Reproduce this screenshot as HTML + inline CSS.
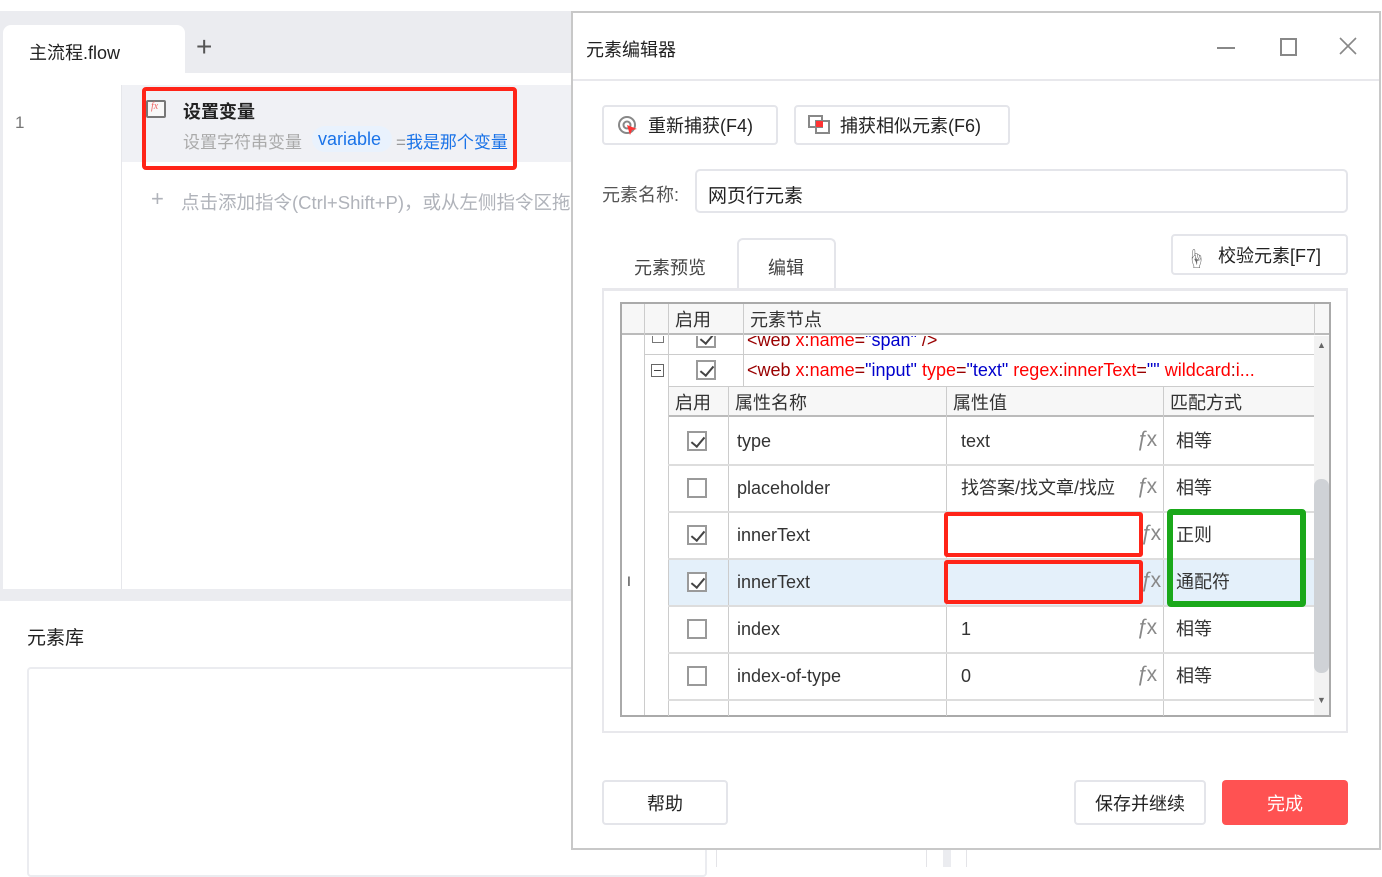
<!DOCTYPE html>
<html><head><meta charset="utf-8"><style>
*{margin:0;padding:0;box-sizing:border-box}
body{width:1382px;height:867px;position:relative;overflow:hidden;background:#fff;font-family:"Liberation Sans","Noto Sans CJK SC",sans-serif;color:#333}
.a{position:absolute}
.t{position:absolute;white-space:nowrap}
.btn{position:absolute;border:2px solid #e4e5ea;border-radius:4px;background:#fff;font-size:18px;color:#222;display:flex;align-items:center;justify-content:center}
.hl{position:absolute;background:#ccc}
.cb{position:absolute;width:20px;height:20px;border:2px solid #9a9a9a;background:#fff}
.cb.c::after{content:"";position:absolute;left:5px;top:1px;width:6px;height:11px;border:solid #444;border-width:0 2px 2px 0;transform:rotate(40deg)}
.fx{position:absolute;font-family:"Liberation Sans",sans-serif;color:#888;font-size:21px;letter-spacing:-2px}
.cell{position:absolute;font-size:18px;color:#333;white-space:nowrap;line-height:22px}
</style></head><body>
<!-- left app -->
<div class="a" style="left:0;top:11px;width:580px;height:590px;background:#ebecf0"></div>
<div class="a" style="left:3px;top:25px;width:182px;height:60px;background:#fff;border-radius:8px 8px 0 0"></div>
<div class="t" style="left:29px;top:39px;font-size:18px;color:#222">主流程.flow</div>
<div class="t" style="left:196px;top:31px;font-size:28px;color:#555;font-weight:300">+</div>
<div class="a" style="left:3px;top:73px;width:568px;height:516px;background:#fff"></div>
<div class="a" style="left:122px;top:85px;width:449px;height:77px;background:#f0f1f5"></div>
<div class="a" style="left:121px;top:85px;width:1px;height:504px;background:#e6e7eb"></div>
<div class="t" style="left:15px;top:113px;font-size:17px;color:#777">1</div>
<div class="a" style="left:146px;top:100px;width:20px;height:18px;border:2px solid #777;border-radius:2px;background:#f8f8f8"></div>
<div class="t" style="left:151px;top:101px;font-size:10px;color:#e66;font-style:italic;font-family:'Liberation Serif',serif">fx</div>
<div class="t" style="left:183px;top:98px;font-size:18px;font-weight:bold;color:#222">设置变量</div>
<div class="t" style="left:183px;top:128px;font-size:17px;color:#aaa">设置字符串变量</div>
<div class="a" style="left:312px;top:126px;width:80px;height:26px;background:#e9f2fd;border-radius:13px"></div>
<div class="t" style="left:318px;top:129px;font-size:18px;color:#1a73e8">variable</div>
<div class="t" style="left:396px;top:128px;font-size:17px;color:#999">=<span style="color:#1a73e8">我是那个变量</span></div>
<div class="a" style="left:142px;top:87px;width:375px;height:83px;border:4px solid #ff2418;border-radius:4px"></div>
<div class="t" style="left:151px;top:186px;font-size:22px;color:#b0b3ba;font-weight:300">+</div>
<div class="a" style="left:181px;top:189px;width:390px;height:26px;overflow:hidden"><div class="t" style="left:0;top:0;font-size:18.5px;color:#b0b3ba">点击添加指令(Ctrl+Shift+P)，或从左侧指令区拖动</div></div>
<div class="a" style="left:3px;top:601px;width:568px;height:266px;background:#fff;border-radius:8px 0 0 0"></div>
<div class="t" style="left:27px;top:623px;font-size:19px;color:#222">元素库</div>
<div class="a" style="left:27px;top:667px;width:680px;height:210px;border:2px solid #ebecf0;border-radius:4px"></div>
<div class="a" style="left:716px;top:850px;width:1px;height:17px;background:#e4e4e8"></div>
<div class="a" style="left:926px;top:850px;width:1px;height:17px;background:#e4e4e8"></div>
<div class="a" style="left:943px;top:850px;width:8px;height:17px;background:#ebecf0"></div>
<div class="a" style="left:966px;top:850px;width:1px;height:17px;background:#e4e4e8"></div>
<!-- dialog -->
<div class="a" style="left:571px;top:11px;width:810px;height:839px;background:#fff;border:2px solid #c8c8c8"></div>
<div class="a" style="left:573px;top:79px;width:806px;height:2px;background:#e8e8ec"></div>
<div class="t" style="left:586px;top:36px;font-size:18px;color:#222">元素编辑器</div>
<div class="a" style="left:1217px;top:47px;width:18px;height:2px;background:#888"></div>
<div class="a" style="left:1280px;top:38px;width:17px;height:18px;border:2px solid #888"></div>
<svg class="a" style="left:1339px;top:37px" width="18" height="18" viewBox="0 0 18 18"><path d="M1 1L17 17M17 1L1 17" stroke="#888" stroke-width="1.6"/></svg>
<div class="btn" style="left:602px;top:105px;width:176px;height:40px;justify-content:flex-start;padding-left:44px">重新捕获(F4)</div>
<svg class="a" style="left:617px;top:115px" width="22" height="22" viewBox="0 0 22 22"><circle cx="10" cy="10" r="8" fill="none" stroke="#888" stroke-width="2"/><circle cx="10" cy="10" r="3.5" fill="none" stroke="#888" stroke-width="2"/><path d="M10 10 L20 14 L15 15 L13 20 Z" fill="#f33"/></svg>
<div class="btn" style="left:794px;top:105px;width:216px;height:40px;justify-content:flex-start;padding-left:44px">捕获相似元素(F6)</div>
<svg class="a" style="left:808px;top:115px" width="24" height="20" viewBox="0 0 24 20"><rect x="1" y="1" width="13" height="11" fill="none" stroke="#888" stroke-width="2"/><rect x="8" y="6" width="13" height="12" fill="none" stroke="#888" stroke-width="2"/><rect x="8" y="6" width="7" height="6" fill="#f33"/></svg>
<div class="t" style="left:602px;top:181px;font-size:18px;color:#555">元素名称:</div>
<div class="a" style="left:695px;top:169px;width:653px;height:44px;border:2px solid #e4e5ea;border-radius:5px"></div>
<div class="t" style="left:708px;top:181px;font-size:19px;color:#222">网页行元素</div>
<div class="t" style="left:634px;top:254px;font-size:18px;color:#444">元素预览</div>
<div class="a" style="left:737px;top:238px;width:99px;height:52px;border:2px solid #e4e5ea;border-bottom:none;border-radius:6px 6px 0 0;background:#fff"></div>
<div class="t" style="left:768px;top:254px;font-size:18px;color:#444">编辑</div>
<div class="btn" style="left:1171px;top:234px;width:177px;height:41px;justify-content:flex-start;padding-left:45px">校验元素[F7]</div>
<div class="t" style="left:1186px;top:243px;font-size:20px;color:#666">☝</div>
<div class="a" style="left:602px;top:288px;width:746px;height:445px;border:2px solid #e8e8ec;border-top-width:3px"></div>
<!-- grid -->
<div class="a" style="left:620px;top:302px;width:711px;height:415px;border:2px solid #aaa;background:#fff"></div>
<div class="a" style="left:622px;top:304px;width:707px;height:31px;background:#f7f7f7;border-bottom:2px solid #bbb"></div>
<div class="hl" style="left:644px;top:304px;width:1px;height:411px;background:#ccc"></div>
<div class="hl" style="left:668px;top:304px;width:1px;height:82px"></div>
<div class="hl" style="left:743px;top:304px;width:1px;height:82px"></div>
<div class="hl" style="left:1314px;top:304px;width:1px;height:31px"></div>
<div class="cell" style="left:675px;top:309px">启用</div>
<div class="cell" style="left:750px;top:309px">元素节点</div>
<div class="a" style="left:645px;top:336px;width:669px;height:18px;overflow:hidden">
<div class="cell" style="left:102px;top:-7px;color:#900">&lt;web <span style="color:#f00">x</span>:<span style="color:#f00">name</span>=<span style="color:#00c">"span"</span> /&gt;</div>
<div class="a" style="left:7px;top:-5px;width:12px;height:12px;border:1px solid #777"></div>
<div class="cb c" style="left:51px;top:-8px"></div>
</div>
<div class="hl" style="left:645px;top:354px;width:669px;height:1px"></div>
<div class="a" style="left:651px;top:364px;width:13px;height:13px;border:1px solid #666"></div>
<div class="a" style="left:654px;top:370px;width:7px;height:1px;background:#444"></div>
<div class="cb c" style="left:696px;top:360px"></div>
<div class="cell" style="left:747px;top:359px;color:#900">&lt;web <span style="color:#f00">x</span>:<span style="color:#f00">name</span>=<span style="color:#00c">"input"</span> <span style="color:#f00">type</span>=<span style="color:#00c">"text"</span> <span style="color:#f00">regex</span>:<span style="color:#f00">innerText</span>=<span style="color:#00c">""</span> <span style="color:#f00">wildcard</span>:<span style="color:#f00">i...</span></div>
<!-- inner table -->
<div class="a" style="left:668px;top:386px;width:646px;height:31px;background:#f7f7f7;border-bottom:2px solid #bbb;border-top:1px solid #ccc"></div>
<div class="cell" style="left:675px;top:392px">启用</div>
<div class="cell" style="left:735px;top:392px">属性名称</div>
<div class="cell" style="left:953px;top:392px">属性值</div>
<div class="cell" style="left:1170px;top:392px">匹配方式</div>
<div class="a" style="left:669px;top:559px;width:645px;height:47px;background:#e4f0fa"></div>
<div class="hl" style="left:668px;top:386px;width:1px;height:330px"></div>
<div class="hl" style="left:728px;top:386px;width:1px;height:330px"></div>
<div class="hl" style="left:946px;top:386px;width:1px;height:330px"></div>
<div class="hl" style="left:1163px;top:386px;width:1px;height:330px"></div>
<div class="hl" style="left:668px;top:464px;width:646px;height:2px;background:#ddd"></div>
<div class="hl" style="left:668px;top:511px;width:646px;height:2px;background:#ddd"></div>
<div class="hl" style="left:668px;top:558px;width:646px;height:2px;background:#ddd"></div>
<div class="hl" style="left:668px;top:605px;width:646px;height:2px;background:#ddd"></div>
<div class="hl" style="left:668px;top:652px;width:646px;height:2px;background:#ddd"></div>
<div class="hl" style="left:668px;top:699px;width:646px;height:2px;background:#ddd"></div>
<div class="cb c" style="left:687px;top:431px"></div><div class="cell" style="left:737px;top:430px">type</div><div class="cell" style="left:961px;top:430px">text</div><div class="fx" style="left:1137px;top:428px">ƒx</div><div class="cell" style="left:1176px;top:430px">相等</div>
<div class="cb" style="left:687px;top:478px"></div><div class="cell" style="left:737px;top:477px">placeholder</div><div class="cell" style="left:961px;top:477px">找答案/找文章/找应</div><div class="fx" style="left:1137px;top:475px">ƒx</div><div class="cell" style="left:1176px;top:477px">相等</div>
<div class="cb c" style="left:687px;top:525px"></div><div class="cell" style="left:737px;top:524px">innerText</div><div class="fx" style="left:1141px;top:522px">ƒx</div><div class="cell" style="left:1176px;top:524px">正则</div>
<div class="cb c" style="left:687px;top:572px"></div><div class="cell" style="left:737px;top:571px">innerText</div><div class="fx" style="left:1141px;top:569px">ƒx</div><div class="cell" style="left:1176px;top:571px">通配符</div>
<div class="cb" style="left:687px;top:619px"></div><div class="cell" style="left:737px;top:618px">index</div><div class="cell" style="left:961px;top:618px">1</div><div class="fx" style="left:1137px;top:616px">ƒx</div><div class="cell" style="left:1176px;top:618px">相等</div>
<div class="cb" style="left:687px;top:666px"></div><div class="cell" style="left:737px;top:665px">index-of-type</div><div class="cell" style="left:961px;top:665px">0</div><div class="fx" style="left:1137px;top:663px">ƒx</div><div class="cell" style="left:1176px;top:665px">相等</div>
<div class="t" style="left:627px;top:573px;font-size:14px;color:#444">I</div>
<!-- scrollbar -->
<div class="a" style="left:1314px;top:336px;width:15px;height:379px;background:#f2f2f2"></div>
<div class="a" style="left:1314px;top:479px;width:15px;height:194px;background:#cfd2d6;border-radius:7px"></div>
<div class="t" style="left:1317px;top:340px;font-size:9px;color:#666">▲</div>
<div class="t" style="left:1317px;top:695px;font-size:9px;color:#666">▼</div>
<!-- highlight boxes -->
<div class="a" style="left:944px;top:512px;width:199px;height:45px;border:4px solid #ff2418;border-radius:3px"></div>
<div class="a" style="left:944px;top:560px;width:199px;height:44px;border:4px solid #ff2418;border-radius:3px"></div>
<div class="a" style="left:1167px;top:509px;width:139px;height:98px;border:6px solid #1aa81a;border-radius:4px"></div>
<!-- footer -->
<div class="btn" style="left:602px;top:780px;width:126px;height:45px">帮助</div>
<div class="btn" style="left:1074px;top:780px;width:132px;height:45px">保存并继续</div>
<div class="a" style="left:1222px;top:780px;width:126px;height:45px;background:#ff5252;border-radius:4px;color:#fff;font-size:18px;display:flex;align-items:center;justify-content:center">完成</div>
</body></html>
